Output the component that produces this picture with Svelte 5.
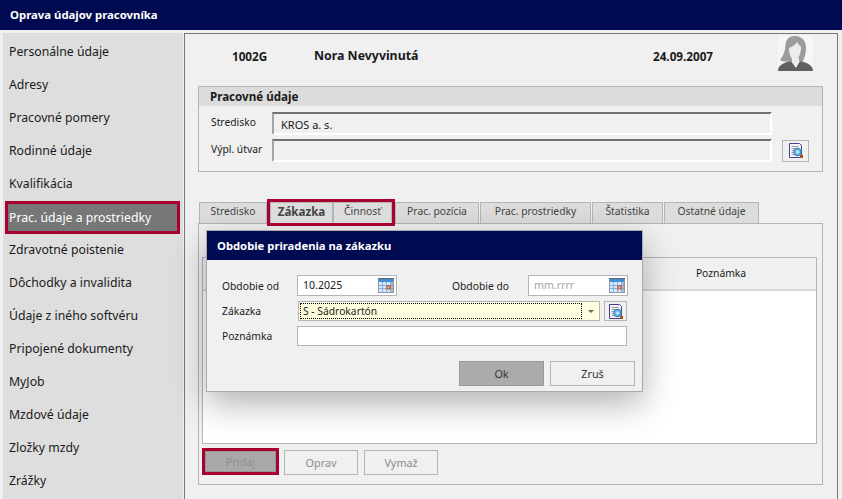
<script lang="ts">
  const menu = [
    "Personálne údaje",
    "Adresy",
    "Pracovné pomery",
    "Rodinné údaje",
    "Kvalifikácia",
    "Prac. údaje a prostriedky",
    "Zdravotné poistenie",
    "Dôchodky a invalidita",
    "Údaje z iného softvéru",
    "Pripojené dokumenty",
    "MyJob",
    "Mzdové údaje",
    "Zložky mzdy",
    "Zrážky",
  ];
  const activeItem = "Prac. údaje a prostriedky";
</script>

{#snippet calendarIcon()}
  <svg class="cal" width="16" height="16" viewBox="0 0 16 16">
    <rect x="0.5" y="1.5" width="15" height="14" fill="#dce9f5" stroke="#8a98a8" />
    <rect x="1" y="2" width="14" height="3" fill="#3f8fd8" />
    <path d="M1 1v2M3 1v2M5 1v2M7 1v2M9 1v2M11 1v2M13 1v2M15 1v2" stroke="#333" stroke-dasharray="1 1" />
    <path d="M1 8.5h14M1 11.5h14M4.5 5v10M8.5 5v10M12.5 5v10" stroke="#7fb2e2" />
    <rect x="9" y="9" width="3" height="3" fill="#f0c8a0" stroke="#c8401c" />
    <path d="M13 5h2v10h-2z" fill="#7d8a96" opacity="0.5" />
  </svg>
{/snippet}

{#snippet lookupIcon()}
  <svg width="16" height="17" viewBox="0 0 16 17">
    <path d="M1.5 1.5h10l2 2v12h-12z" fill="#f6f6fa" stroke="#4a3f8c" />
    <path d="M3.5 4.5h7M3.5 6.5h4M3.5 8.5h3M3.5 10.5h3M3.5 12.5h3" stroke="#9a9aa8" />
    <circle cx="9.5" cy="10" r="3.5" fill="#7cc4ee" stroke="#3f86bd" stroke-width="1.4" />
    <circle cx="9.5" cy="10" r="1.2" fill="#d8f0fb" />
    <rect x="12" y="13" width="3" height="3" fill="#b0501c" />
  </svg>
{/snippet}

<div class="app">
  <header class="topbar">Oprava údajov pracovníka</header>

  <div class="layout">
    <nav class="sidebar">
      {#each menu as item}
        <div class="menu-item" class:active={item === activeItem}>{item}</div>
      {/each}
    </nav>

    <main class="content">
      <div class="employee">
        <span class="emp-id">1002G</span>
        <span class="emp-name">Nora Nevyvinutá</span>
        <span class="emp-date">24.09.2007</span>
        <svg class="photo" width="35" height="35" viewBox="0 0 35 35">
          <defs>
            <filter id="soft"><feGaussianBlur stdDeviation="0.5" /></filter>
          </defs>
          <rect width="35" height="35" fill="#f6f6f6" />
          <g filter="url(#soft)">
            <path d="M17 0c-6 0-9 3-9.500 9-.3 5-1.500 10-5.500 15 3 2 7 2 10 1h13c2-4 3-8 3-14S24 0 17 0z" fill="#9c9c9c" />
            <path d="M11 12c3-1 6-3 8-6 1 2 3 4 4 5 0 6-2 11-5 14h-2c-3-2-5-7-5-13z" fill="#ececec" />
            <path d="M14 22h7v3l-3 6-4-6z" fill="#ededed" />
            <path d="M0 35c0-5 4-8 13-10l5 7 4-7c9 2 13 5 13 10z" fill="#606060" />
          </g>
        </svg>
      </div>

      <section class="work-data">
        <div class="section-title">Pracovné údaje</div>
        <div class="section-body">
          <div class="row">
            <span class="row-label">Stredisko</span>
            <div class="sunken">KROS a. s.</div>
          </div>
          <div class="row">
            <span class="row-label">Výpl. útvar</span>
            <div class="sunken"></div>
            <button class="icon-btn" type="button">{@render lookupIcon()}</button>
          </div>
        </div>
      </section>

      <div class="tabs">
        <div class="tab" style="width: 68px">Stredisko</div>
        <div class="tab-group">
          <div class="tab current" style="width: 63px">Zákazka</div>
          <div class="tab" style="width: 59px">Činnosť</div>
        </div>
        <div class="tab" style="width: 84px">Prac. pozícia</div>
        <div class="tab" style="width: 111px">Prac. prostriedky</div>
        <div class="tab" style="width: 71px">Štatistika</div>
        <div class="tab" style="width: 95px">Ostatné údaje</div>
      </div>

      <div class="tab-panel">
        <div class="grid">
          <div class="grid-head"><span class="col-note">Poznámka</span></div>
        </div>
        <div class="grid-actions">
          <button class="btn add" type="button"><span>Pridaj</span></button>
          <button class="btn" type="button">Oprav</button>
          <button class="btn" type="button">Vymaž</button>
        </div>
      </div>
    </main>
  </div>

  <div class="dialog">
    <div class="dialog-title">Obdobie priradenia na zákazku</div>
    <div class="dialog-form">
      <div class="form-row">
        <label class="form-label" for="od">Obdobie od</label>
        <div class="field date" id="od">10.2025{@render calendarIcon()}</div>
        <label class="form-label to" for="do">Obdobie do</label>
        <div class="field date placeholder" id="do">mm.rrrr{@render calendarIcon()}</div>
      </div>
      <div class="form-row">
        <span class="form-label">Zákazka</span>
        <div class="field combo">
          <span class="combo-value">S - Sádrokartón</span>
          <span class="arrow"></span>
        </div>
        <button class="icon-btn small" type="button">{@render lookupIcon()}</button>
      </div>
      <div class="form-row">
        <span class="form-label">Poznámka</span>
        <div class="field wide"></div>
      </div>
    </div>
    <div class="dialog-actions">
      <button class="btn dlg primary" type="button">Ok</button>
      <button class="btn dlg" type="button">Zruš</button>
    </div>
  </div>
</div>

<style>
  :global(body) {
    background: #f0f0f0;
  }

  .app {
    position: relative;
    width: 842px;
    height: 499px;
    overflow: hidden;
    font-family: "Noto Sans", sans-serif;
    font-size: 10.3px;
    color: #1a1a1a;
  }

  .topbar {
    height: 30px;
    line-height: 30px;
    padding-left: 10px;
    background: #000a50;
    color: #fff;
    font-weight: 700;
    font-size: 11.35px;
  }

  .layout {
    display: flex;
    padding: 3px 4px 0 3px;
  }

  .sidebar {
    width: 180px;
    height: 466px;
    padding-top: 3px;
    margin-right: 1px;
    background: #dedede;
    box-sizing: border-box;
    font-size: 12.25px;
  }

  .menu-item {
    height: 33px;
    line-height: 32px;
    padding-left: 6px;
    box-sizing: border-box;
  }

  .menu-item.active {
    margin: 0 3px 0 2px;
    padding-left: 1px;
    line-height: 27px;
    background: #777;
    border: 3px solid #a8002f;
    color: #fff;
  }

  .content {
    flex: 1;
    height: 466px;
    padding-left: 13px;
    border: 1px solid #777;
    border-bottom: 0;
    box-sizing: border-box;
  }

  .employee {
    display: flex;
    height: 52px;
    padding-left: 34px;
    font-weight: 700;
    font-size: 11.7px;
    box-sizing: border-box;
  }

  .employee span {
    padding-top: 14px;
    line-height: 16px;
  }

  .emp-id {
    width: 82px;
  }

  .emp-name {
    width: 339px;
    font-size: 12.35px;
  }

  .emp-date {
    width: 125px;
  }

  .photo {
    margin-top: 2px;
  }

  .work-data {
    width: 625px;
    height: 86px;
    border: 1px solid #b5b5b5;
    box-sizing: border-box;
  }

  .section-title {
    height: 19px;
    line-height: 19px;
    padding-left: 11px;
    background: #dcdcdc;
    font-weight: 700;
    font-size: 11.6px;
  }

  .section-body {
    display: flex;
    flex-direction: column;
    gap: 4px;
    padding: 6px 0 0 12px;
  }

  .row {
    display: flex;
    align-items: center;
  }

  .row-label {
    width: 61px;
    padding-bottom: 3px;
  }

  .sunken {
    width: 500px;
    height: 23px;
    line-height: 21px;
    padding-left: 7px;
    border: 2px solid;
    border-color: #6f6f6f #fff #fff #a5a5a5;
    box-sizing: border-box;
    font-size: 11px;
  }

  .icon-btn {
    display: flex;
    align-items: center;
    justify-content: center;
    width: 27px;
    height: 22px;
    margin-left: 10px;
    padding: 0;
    background: #f0f0f0;
    border: 1px solid #b5b5b5;
    box-sizing: border-box;
  }

  .icon-btn.small {
    width: 23px;
    height: 20px;
    margin-left: 4px;
  }

  .tabs {
    display: flex;
    gap: 1px;
    margin: 30px 0 0 1px;
    height: 21px;
  }

  .tab {
    height: 21px;
    line-height: 17px;
    text-align: center;
    background: #dcdcdc;
    border: 1px solid #b5b5b5;
    border-bottom: 0;
    box-sizing: border-box;
    color: #444;
  }

  .tab.current {
    font-weight: 700;
    font-size: 11.6px;
  }

  .tab-group {
    position: relative;
    z-index: 1;
    display: flex;
    margin: 0 2px;
    outline: 3px solid #a8002f;
  }

  .tab-panel {
    width: 625px;
    height: 262px;
    padding: 33px 5px 0 3px;
    border: 1px solid #b5b5b5;
    box-sizing: border-box;
  }

  .grid {
    height: 187px;
    background: #fff;
    border: 1px solid #b5b5b5;
    box-sizing: border-box;
  }

  .grid-head {
    display: flex;
    justify-content: flex-end;
    height: 33px;
    padding-right: 2px;
    background: #f0f0f0;
    border-bottom: 2px solid #d8d8d8;
    box-sizing: border-box;
  }

  .col-note {
    width: 186px;
    line-height: 31px;
    text-align: center;
  }

  .grid-actions {
    display: flex;
    align-items: flex-end;
    height: 27px;
    margin-top: 4px;
  }

  .btn {
    width: 74px;
    height: 25px;
    padding: 0;
    margin-left: 6px;
    font: inherit;
    font-size: 10.8px;
    color: #8a8a8a;
    background: #f0f0f0;
    border: 1px solid #b5b5b5;
    box-sizing: border-box;
  }

  .btn.add {
    display: flex;
    width: 77px;
    height: 27px;
    margin-left: 0;
    background: #a9a9a9;
    border: 3px solid #a8002f;
    color: #8f8f8f;
  }

  .btn.add + .btn {
    margin-left: 5px;
  }

  .btn.add span {
    flex: 1;
    line-height: 19px;
    border: 1px dotted #808080;
  }

  .dialog {
    position: absolute;
    left: 206px;
    top: 230px;
    width: 437px;
    height: 162px;
    background: #f0f0f0;
    border: 1px solid #aaa;
    box-sizing: border-box;
    box-shadow: 0 12px 32px rgba(0, 0, 0, 0.3);
  }

  .dialog-title {
    height: 29px;
    line-height: 29px;
    padding-left: 10px;
    background: #000a50;
    color: #fff;
    font-weight: 700;
    font-size: 11.25px;
  }

  .dialog-form {
    display: flex;
    flex-direction: column;
    gap: 5px;
    padding: 15px 0 0 15px;
  }

  .form-row {
    display: flex;
    align-items: center;
  }

  .form-label {
    width: 75px;
  }

  .form-label.to {
    width: 76px;
    margin-left: 55px;
  }

  .field {
    height: 20px;
    line-height: 18px;
    padding-left: 5px;
    background: #fff;
    border: 1px solid #b5b5b5;
    box-sizing: border-box;
  }

  .date {
    position: relative;
    width: 100px;
    height: 21px;
    line-height: 19px;
    font-size: 10.6px;
  }

  .placeholder {
    color: #a0a8a0;
  }

  .cal {
    position: absolute;
    right: 2px;
    top: 1px;
  }

  .combo {
    display: flex;
    align-items: center;
    width: 302px;
    margin-left: 1px;
    padding: 1px;
    background: #ffffe0;
  }

  .combo-value {
    flex: 1;
    height: 16px;
    line-height: 15px;
    padding-left: 2px;
    border: 1px dotted #000;
    box-sizing: border-box;
  }

  .arrow {
    width: 0;
    height: 0;
    margin: 0 4px 0 6px;
    border: 3px solid transparent;
    border-top: 3px solid #666;
    border-bottom: 0;
  }

  .wide {
    width: 330px;
  }

  .dialog-actions {
    display: flex;
    justify-content: flex-end;
    gap: 6px;
    margin-top: 15px;
    padding-right: 7px;
  }

  .btn.dlg {
    width: 85px;
    margin-left: 0;
    color: #333;
  }

  .btn.primary {
    background: #ababab;
    border-color: #999;
  }
</style>
